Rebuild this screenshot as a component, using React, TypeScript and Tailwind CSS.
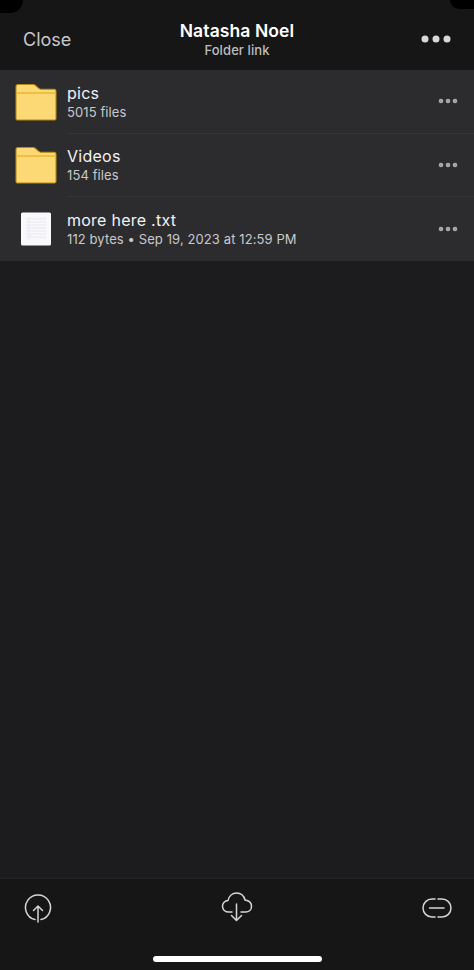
import { MoreHorizontal } from "lucide-react";

const FONT = "font-['Inter','Liberation_Sans',sans-serif]";

function FolderIcon() {
  return (
    <svg width="42" height="38" viewBox="0 0 42 38" fill="none">
      <path
        d="M1 3.5C1 2.2 1.8 1.5 3 1.5H18C19 1.5 19.8 1.8 20.5 2.5L23.5 5.2C24.2 5.9 25 6.2 26 6.2H39.2C40.3 6.2 41 7 41 8V35.5C41 36.5 40.4 37 39.5 37H2.5C1.6 37 1 36.5 1 35.5V3.5Z"
        fill="#fcd975"
        stroke="#b98a12"
        strokeWidth="1.1"
      />
      <path d="M1.5 10H40.5" stroke="#e9b735" strokeWidth="1.5" />
    </svg>
  );
}

function TextFileIcon() {
  return (
    <svg width="32" height="34" viewBox="0 0 32 34" fill="none">
      <rect x="1" y="0.5" width="30" height="33" rx="1.5" fill="#f9f9fc" />
      <path
        d="M6 7H26M6 10H26M6 13H26M6 16H26M6 19H26M6 22H26M6 25H26"
        stroke="#e3e3ef"
        strokeWidth="0.8"
      />
      <path d="M9 5V28" stroke="#ece6ec" strokeWidth="0.8" />
    </svg>
  );
}

function FileRow({
  name,
  meta,
  icon,
  divider,
}: {
  name: string;
  meta: string;
  icon: React.ReactNode;
  divider?: boolean;
}) {
  return (
    <div className="flex h-[63.5px] items-center bg-[#2c2c2e] pl-[15px]">
      <div className="flex w-[42px] shrink-0 justify-center">{icon}</div>
      <div
        className={`ml-[10px] flex h-full flex-1 items-center pr-[14px] ${
          divider ? "border-b border-[#363638]" : ""
        }`}
      >
        <div className="flex-1 pt-[1px]">
          <p className="text-[16px] leading-[20px] font-normal tracking-[0.25px] text-[#f2f2f4]">{name}</p>
          <p className="text-[13px] leading-[18px] tracking-[0.1px] text-[#c9c9cc]">{meta}</p>
        </div>
        <MoreHorizontal size={24} strokeWidth={2.6} className="text-[#a9a9ab]" />
      </div>
    </div>
  );
}

export default function App() {
  return (
    <div className={`relative flex h-[970px] w-[474px] flex-col overflow-hidden bg-[#1c1c1e] ${FONT}`}>
      {/* screen corners showing through at the top */}
      <div className="absolute top-0 left-0 h-[13px] w-[23px] rounded-br-[20px] bg-black" />
      <div className="absolute top-0 right-0 h-[9px] w-[24px] rounded-bl-[14px] bg-black" />

      <header className="flex h-[70px] shrink-0 items-center bg-[#161617] px-[23px] pt-[8px]">
        <span className="w-[80px] text-[18px] text-[#c8c8ca]">Close</span>
        <div className="flex-1 text-center">
          <p className="text-[17.5px] leading-[21px] font-semibold tracking-[0.1px] text-white">Natasha Noel</p>
          <p className="text-[13px] leading-[18px] font-medium tracking-[0.1px] text-[#bdbdc0]">Folder link</p>
        </div>
        <div className="flex w-[80px] justify-end">
          <svg width="30" height="8" viewBox="0 0 30 8" fill="#d8d8da">
            <circle cx="4" cy="4" r="3.5" />
            <circle cx="15" cy="4" r="3.5" />
            <circle cx="26" cy="4" r="3.5" />
          </svg>
        </div>
      </header>

      <FileRow name="pics" meta="5015 files" icon={<FolderIcon />} divider />
      <FileRow name="Videos" meta="154 files" icon={<FolderIcon />} divider />
      <FileRow name="more here .txt" meta="112 bytes • Sep 19, 2023 at 12:59 PM" icon={<TextFileIcon />} />

      <div className="flex-1" />

      <footer className="h-[92px] shrink-0 border-t border-[#232325] bg-[#161617]">
        <div className="flex items-start justify-between pt-[14px] pr-[22px] pl-[24px] text-[#d6d6d8]">
          <svg width="28" height="30" viewBox="0 0 28 30" fill="none" stroke="currentColor" strokeWidth="1.5" strokeLinecap="round">
            <path d="M11 26.6A12.5 12.5 0 1 1 17 26.6" />
            <path d="M14 29V13M9.5 17.5L14 13L18.5 17.5" strokeLinejoin="round" />
          </svg>
          <svg width="32" height="32" viewBox="0 0 32 32" fill="none" stroke="currentColor" strokeWidth="1.5" strokeLinecap="round" strokeLinejoin="round" className="mt-[-2px]">
            <path d="M11 21H8C4 21 1.5 18.5 1.5 15.2C1.5 12 4 9.6 7 9.5C8 5 11.5 2 15.5 2C19.8 2 23 5 24 9C27.8 9.5 30.5 12 30.5 15.5C30.5 18.7 28 21 24.5 21H20" />
            <path d="M15.5 13V29M10.5 24.5L15.5 29.5L20.5 24.5" />
          </svg>
          <svg width="30" height="20" viewBox="0 0 30 20" fill="none" stroke="currentColor" strokeWidth="1.5" strokeLinecap="round" className="mt-[5px]">
            <path d="M13 1H10A9 9 0 0 0 10 19H13" />
            <path d="M16 1H20A9 9 0 0 1 20 19H16" />
            <path d="M7.5 10H22" />
          </svg>
        </div>
      </footer>

      {/* home indicator */}
      <div className="absolute bottom-[8px] left-[153px] h-[6px] w-[169px] rounded-full bg-white" />
    </div>
  );
}
